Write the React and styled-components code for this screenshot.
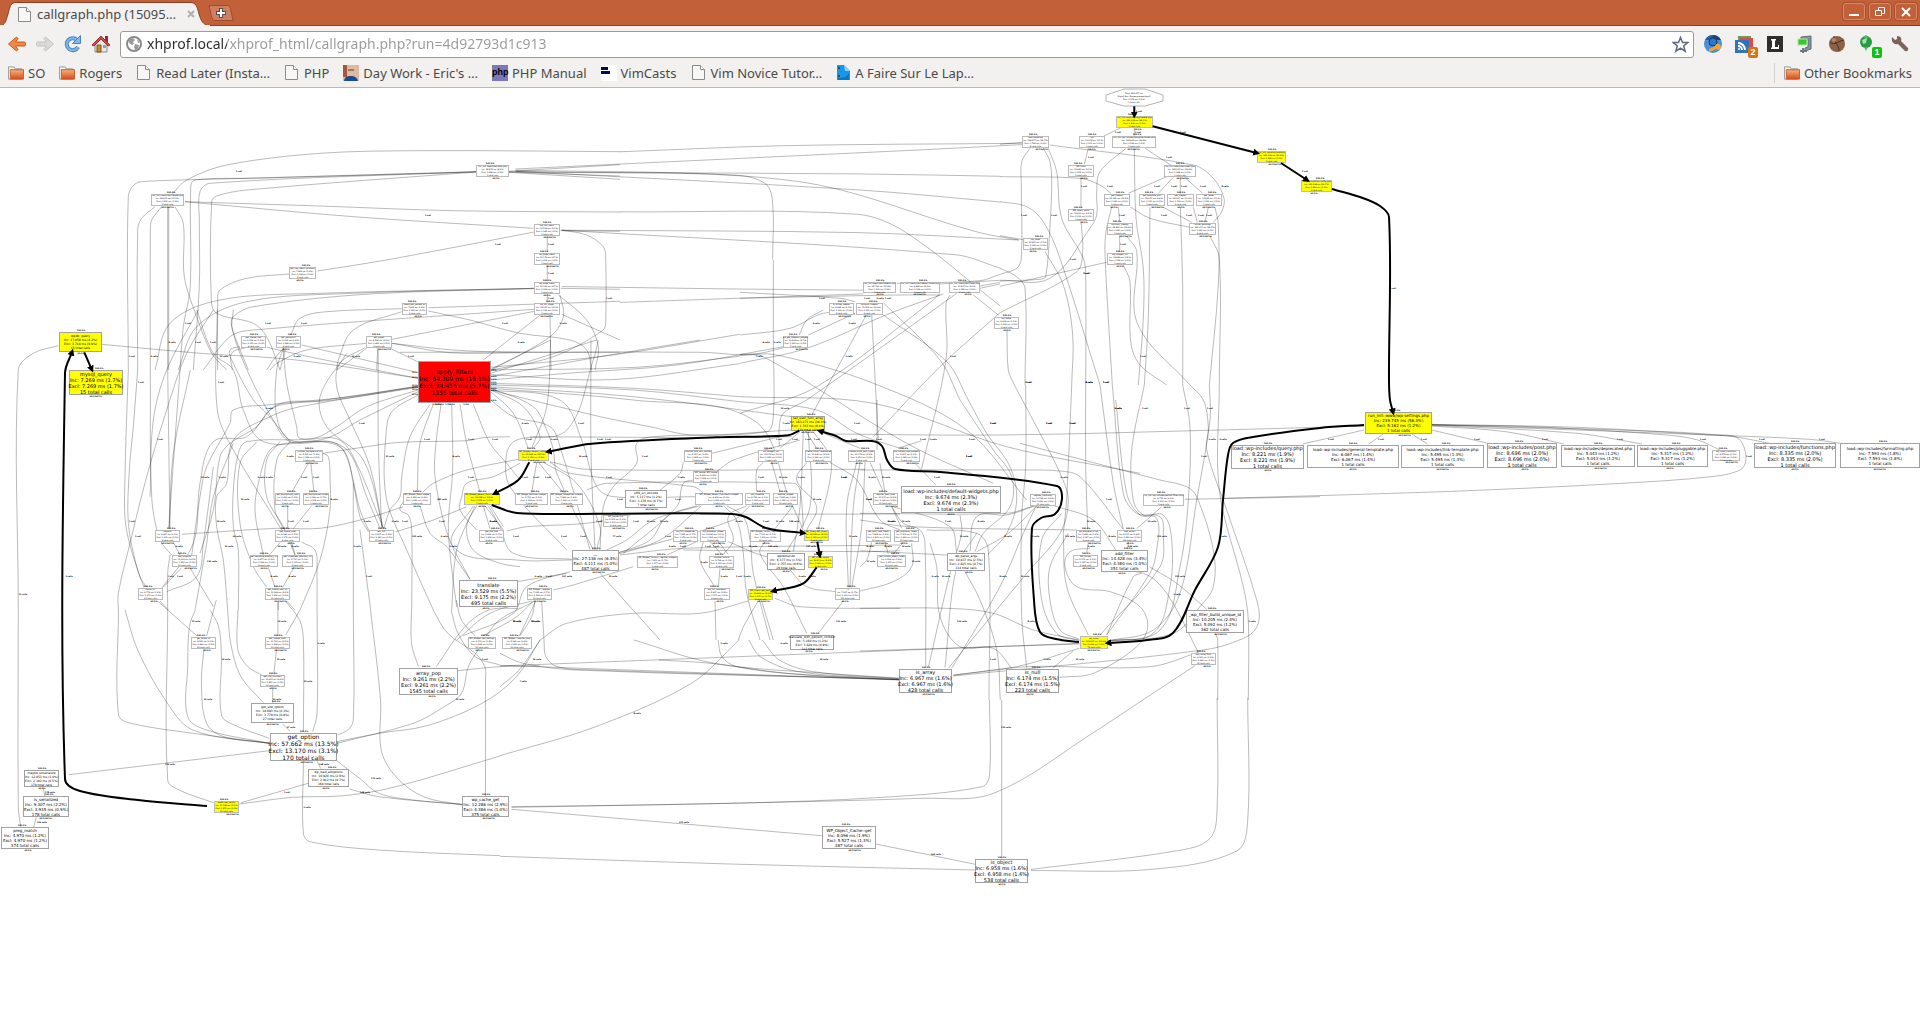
import React from "react";
import styled, { createGlobalStyle } from "styled-components";

const Global = createGlobalStyle`
  * { box-sizing: border-box; }
  html, body { margin: 0; height: 100%; background: #fff; }
  body { font-family: "Noto Sans", "Open Sans", sans-serif; overflow: hidden; }
  button { font: inherit; padding: 0; border: 0; background: none; color: inherit; }
`;

/* ---------- browser frame ---------- */

const Window = styled.div`
  display: flex;
  flex-direction: column;
  height: 100vh;
`;
const TitleBar = styled.header`
  display: flex;
  align-items: flex-end;
  height: 26px;
  flex: none;
  background: #c26039;
  border-bottom: 1px solid #8b4023;
`;
const Tab = styled.div`
  position: relative;
  display: flex;
  align-items: center;
  gap: 4px;
  width: 206px;
  height: 24px;
  margin-bottom: -1px;
  padding: 0 11px 0 17px;
  color: #4a4a4a;
  font-size: 13px;
  line-height: 20px;
`;
const TabShape = styled.svg`
  position: absolute;
  left: 0;
  top: 0;
  width: 210px;
  height: 24px;
`;
const TabTitle = styled.span`
  position: relative;
  flex: 1;
  white-space: nowrap;
`;
const TabPart = styled.span`
  position: relative;
  display: flex;
`;
const TabClose = styled.button`
  position: relative;
  display: flex;
`;
const NewTab = styled.button`
  display: flex;
  margin: 0 0 4px 2px;
`;
const WindowButtons = styled.div`
  display: flex;
  gap: 4px;
  margin: 0 3px 5px auto;
`;
const WindowButton = styled.button`
  display: flex;
  align-items: center;
  justify-content: center;
  width: 22px;
  height: 17px;
  border: 1px solid #d58a6c;
  border-radius: 3px;
  box-shadow: 0 0 0 1px #a9502e;
`;
const Toolbar = styled.nav`
  display: flex;
  align-items: center;
  flex: none;
  height: 35px;
  padding: 1px 11px 0 7px;
  background: #f2f1ef;
`;
const NavButtons = styled.div`
  display: flex;
  gap: 8px;
  margin-right: 9px;
`;
const IconButton = styled.button`
  position: relative;
  display: flex;
  width: 20px;
  height: 20px;
`;
const Omnibox = styled.div`
  display: flex;
  align-items: center;
  gap: 5px;
  flex: 1;
  height: 27px;
  padding: 0 4px 0 5px;
  background: #fff;
  border: 1px solid #9d9b97;
  border-radius: 3px;
`;
const Address = styled.input`
  flex: 1;
  min-width: 0;
  padding: 0;
  border: 0;
  outline: 0;
  font: 14px/22px "Noto Sans", sans-serif;
  color: transparent;
  background: linear-gradient(to right, #2b2b2b 0 80px, #9a9a9a 80px);
  -webkit-background-clip: text;
  background-clip: text;
`;
const Extensions = styled.div`
  display: flex;
  gap: 11px;
  margin-left: 9px;
`;
const Badge = styled.span`
  position: absolute;
  right: -4px;
  bottom: -4px;
  width: 10px;
  height: 11px;
  border-radius: 2px;
  background: ${(p) => p.$color};
  color: #fff;
  font: bold 9px/11px "Liberation Sans", sans-serif;
  text-align: center;
`;
const BookmarkBar = styled.nav`
  display: flex;
  align-items: center;
  flex: none;
  height: 27px;
  padding: 0 8px 3px;
  gap: 14px;
  background: #f2f1ef;
  border-bottom: 1px solid #b9b8b6;
  color: #4a4a4a;
  font-size: 13px;
  line-height: 20px;
`;
const Bookmark = styled.a`
  display: flex;
  align-items: center;
  gap: 4px;
  color: inherit;
  text-decoration: none;
  white-space: nowrap;
`;
const OtherBookmarks = styled.div`
  display: flex;
  margin-left: auto;
  padding-left: 9px;
  border-left: 1px solid #d3d2d0;
`;

const PageIcon = () => (
  <svg width="16" height="17" viewBox="0 0 16 17">
    <path d="M1.5 1.5h8l4 4v10h-12z" fill="#f7f7f7" stroke="#8a8a88" strokeLinejoin="round" />
    <path d="M9.5 1.5v4h4" fill="#fff" stroke="#8a8a88" />
  </svg>
);
const FolderIcon = () => (
  <svg width="16" height="16" viewBox="0 0 17 16">
    <defs>
      <linearGradient id="folder" x1="0" y1="0" x2="0" y2="1">
        <stop offset="0" stopColor="#f6b27c" />
        <stop offset="1" stopColor="#da4a16" />
      </linearGradient>
    </defs>
    <path d="M.5 14.500V1.500h6l1 2h7v11z" fill="#f4f2f0" stroke="#999" />
    <path d="M2.500 4.500h14v10h-14z" fill="url(#folder)" stroke="#c85a2a" />
  </svg>
);
const PhotoIcon = () => (
  <svg width="16" height="16">
    <rect width="16" height="16" fill="#dcb9a4" />
    <rect width="4" height="12" fill="#a3573d" />
    <ellipse cx="8" cy="6" rx="3" ry="4" fill="#e8b89a" />
    <path d="M5 5h6" stroke="#4b3b38" />
    <path d="M1 16c1-5 4-5 7-5s6 1 7 5z" fill="#1c4a8e" />
  </svg>
);
const PhpTile = styled.span`
  width: 16px;
  height: 16px;
  background: #7a78b8;
  color: #000;
  font: bold 9px/14px "Liberation Sans", sans-serif;
  text-align: center;
`;
const VimIcon = () => (
  <svg width="16" height="16">
    <rect width="16" height="16" fill="#fff" />
    <path d="M0 2h7v3H0zM0 6h9v3H0z" fill="#06094a" />
  </svg>
);
const BlueIcon = () => (
  <svg width="15" height="17">
    <path d="M1 1h7l6 6v9H1z" fill="#1797e6" />
    <path d="M8 1l6 6H9z" fill="#8fd0f7" />
    <path d="M2 16h11V9c-2 4-6 5-11 5z" fill="#0b76c4" />
    <circle cx="3" cy="4" r="1" fill="#234" />
    <circle cx="3" cy="12" r="1" fill="#234" />
  </svg>
);

const BOOKMARKS = [
  [FolderIcon, "SO"],
  [FolderIcon, "Rogers"],
  [PageIcon, "Read Later (Insta…"],
  [PageIcon, "PHP"],
  [PhotoIcon, "Day Work - Eric's …"],
  [() => <PhpTile>php</PhpTile>, "PHP Manual"],
  [VimIcon, "VimCasts"],
  [PageIcon, "Vim Novice Tutor…"],
  [BlueIcon, "A Faire Sur Le Lap…"],
];

const Arrow = ({ color, edge, flip }) => (
  <svg width="20" height="20" viewBox="0 0 20 20" transform={flip ? "scale(-1 1)" : undefined}>
    <path d="M1.500 10l8-7 1.500 1.500L8.500 8h9c1.500 0 1.500 4 0 4h-9l2.500 3.500-1.500 1.500z" fill={color} stroke={edge} strokeLinejoin="round" />
  </svg>
);

function Frame() {
  return (
    <>
      <TitleBar>
        <Tab>
          <TabShape viewBox="0 0 210 24">
            <path d="M0 24C5 23 6 19 8 12C10 4 11 .5 16 .5H190C196 .5 197 4 199 12C201 19 203 23 210 24Z" fill="#f2f1ef" stroke="#8b4023" />
            <path d="M0 24H210" stroke="#f2f1ef" strokeWidth="2" />
          </TabShape>
          <TabPart><PageIcon /></TabPart>
          <TabTitle>callgraph.php (15095…</TabTitle>
          <TabClose aria-label="Close tab">
            <svg width="8" height="8"><path d="M1 1l6 6M7 1l-6 6" stroke="#b3b0ad" strokeWidth="2" /></svg>
          </TabClose>
        </Tab>
        <NewTab aria-label="New tab">
          <svg width="26" height="16">
            <path d="M1 .5h19c2 0 2 1 5 15H7C3 15.500 3 8 1 .5z" fill="#cf7f60" stroke="#a04b2a" />
            <path d="M13 3v10M8 8h10" stroke="#574a55" strokeWidth="4" />
            <path d="M13 4v8M9 8h8" stroke="#fff" strokeWidth="2" />
          </svg>
        </NewTab>
        <WindowButtons>
          <WindowButton aria-label="Minimize"><svg width="12" height="10"><path d="M1 8h10" stroke="#fff" strokeWidth="2" /></svg></WindowButton>
          <WindowButton aria-label="Restore">
            <svg width="12" height="10" fill="none" stroke="#fff"><path d="M4.500 3V.5h6v6H8" /><path d="M1.500 3.500h6v5h-6z" /></svg>
          </WindowButton>
          <WindowButton aria-label="Close"><svg width="10" height="10"><path d="M1 1l8 8M9 1l-8 8" stroke="#fff" strokeWidth="2" /></svg></WindowButton>
        </WindowButtons>
      </TitleBar>
      <Toolbar>
        <NavButtons>
          <IconButton aria-label="Back"><Arrow color="#f08a3c" edge="#c9581a" /></IconButton>
          <IconButton aria-label="Forward"><Arrow color="#dcdad7" edge="#c4c2bf" flip /></IconButton>
          <IconButton aria-label="Reload">
            <svg width="20" height="20">
              <path d="M15 13a6 6 0 1 1-1-7" fill="none" stroke="#4587c7" strokeWidth="4" />
              <path d="M15 13a6 6 0 1 1-1-7" fill="none" stroke="#82b6e6" strokeWidth="2" />
              <path d="M17.500 1.500v8h-8z" fill="#82b6e6" stroke="#4587c7" />
            </svg>
          </IconButton>
          <IconButton aria-label="Home">
            <svg width="20" height="20">
              <path d="M4 9l6-5 6 5v9H4z" fill="#ece9e4" stroke="#8c8a86" />
              <path d="M14 2h3v6h-3z" fill="#8f2f2f" />
              <path d="M1 11l9-9 9 9-2 1-7-7-7 7z" fill="#d44b4b" stroke="#a52b2b" />
              <path d="M6 11h4v7H6z" fill="#c98a2d" stroke="#7e5518" />
              <path d="M12 11h3v3h-3z" fill="#7ea7cf" />
            </svg>
          </IconButton>
        </NavButtons>
        <Omnibox>
          <svg width="16" height="16">
            <circle cx="8" cy="8" r="7" fill="#fff" stroke="#8a8a8a" strokeWidth="2" />
            <path d="M3 3l4-1 2 2-2 2 1 2-2 1-3-2zM9 8l4 1-1 4-3 1-1-3zM11 3l3 3-2 1z" fill="#9a9a9a" />
          </svg>
          <Address aria-label="Address" defaultValue="xhprof.local/xhprof_html/callgraph.php?run=4d92793d1c913" />
          <svg width="17" height="17" viewBox="0 0 17 17">
            <path d="M8.500 1.500l2 5h5.200l-4 3.400 1.500 5.300-4.700-3-4.700 3 1.500-5.300-4-3.400h5.200z" fill="#fff" stroke="#5f6980" strokeWidth="1.500" />
          </svg>
        </Omnibox>
        <Extensions>
          <IconButton aria-label="Chromium account">
            <svg width="20" height="20">
              <circle cx="10" cy="10" r="9" fill="#4b8fd8" />
              <path d="M10 1a9 9 0 0 1 8 5h-8z" fill="#1d4278" />
              <path d="M2 6a9 9 0 0 1 8-5v5z" fill="#2c5f9f" />
              <circle cx="10" cy="8" r="4" fill="#2a7ad0" stroke="#16365f" />
              <path d="M6 15l6-3a3 3 0 1 1 1 3l-4 2-3 1z" fill="#f0a43a" />
            </svg>
          </IconButton>
          <IconButton aria-label="RSS feeds">
            <svg width="20" height="20">
              <path d="M4 2h13v10H4z" fill="#6d9c4c" />
              <path d="M6 4h13v10H6z" fill="#d9494f" />
              <path d="M1 6h14v13H1z" fill="#2f74b8" />
              <path d="M4 9a7 7 0 0 1 7 7M4 12a4 4 0 0 1 4 4" fill="none" stroke="#fff" strokeWidth="2" />
              <circle cx="5" cy="15" r="1" fill="#fff" />
            </svg>
            <Badge $color="#d9730d">2</Badge>
          </IconButton>
          <IconButton aria-label="Lazarus">
            <svg width="20" height="20">
              <rect x="2" y="2" width="16" height="16" fill="#2e2e2e" />
              <path d="M6 5h5v1l-1 1v6h3v-2h1v4H6v-1l1-1V7L6 6z" fill="#fff" />
            </svg>
          </IconButton>
          <IconButton aria-label="Screen capture">
            <svg width="20" height="20">
              <path d="M5 3l10-1v13l-6 2v-3l3-1V5L5 6z" fill="#8294a0" stroke="#5d6d78" />
              <rect x="2" y="5" width="9" height="6" fill="#34c924" stroke="#aee8a4" />
              <path d="M4 17h7M7 14v5" stroke="#6b7a84" strokeWidth="2" />
            </svg>
          </IconButton>
          <IconButton aria-label="Cookies">
            <svg width="20" height="20">
              <circle cx="10" cy="10" r="8" fill="#8b6148" />
              <path d="M3 8c5 4 8-1 14-2M7 2c-1 6 5 8 5 15" fill="none" stroke="#4f3021" />
              <circle cx="7" cy="6" r="2" fill="#b08a70" />
            </svg>
          </IconButton>
          <IconButton aria-label="Proxy status">
            <svg width="20" height="20">
              <ellipse cx="8" cy="8" rx="6" ry="6" fill="#2c9a45" />
              <path d="M8 1l3 2-3 2-3-2zM6 13h4l-2 4z" fill="#55b36a" />
              <path d="M4 6l5-2-1 5-3 1z" fill="#9be5a6" />
            </svg>
            <Badge $color="#0cc40c">1</Badge>
          </IconButton>
          <IconButton aria-label="Settings">
            <svg width="20" height="20">
              <path d="M3 3l3 3 2-1V2c4 0 5 3 4 5l7 7c1 2-1 4-3 3L9 10c-4 1-7-2-6-7z" fill="#7d6257" />
            </svg>
          </IconButton>
        </Extensions>
      </Toolbar>
      <BookmarkBar>
        {BOOKMARKS.map(([Icon, text]) => (
          <Bookmark href="#" key={text}><Icon />{text}</Bookmark>
        ))}
        <OtherBookmarks><Bookmark href="#"><FolderIcon />Other Bookmarks</Bookmark></OtherBookmarks>
      </BookmarkBar>
    </>
  );
}

/* ---------- call graph ---------- */

const Viewport = styled.main`
  position: relative;
  flex: 1;
  min-height: 0;
  overflow: hidden;
  background: #fff;
`;
const Edges = styled.svg`
  position: absolute;
  left: 0;
  top: 0;
  font-family: "DejaVu Sans", sans-serif;
`;
const Thin = styled.path`
  fill: none;
  stroke: rgba(0, 0, 0, 0.27);
`;
const Thick = styled.path`
  fill: none;
  stroke: #000;
  stroke-width: 2px;
`;
const Tag = styled.text`
  font-size: 2px;
  font-weight: ${(p) => (p.$strong ? "bold" : "normal")};
  text-anchor: middle;
  fill: #000;
`;
const FILL = { w: "#fff", y: "#ffff00", r: "#ff0000" };
const LINE = { 2: 3, 3: 4, 4: 5, 5: 6, 6: 7 };
const Box = styled.div`
  position: absolute;
  display: flex;
  flex-direction: column;
  align-items: center;
  justify-content: center;
  background: ${(p) => FILL[p.$fill]};
  border: 1px solid ${(p) => (p.$size === 2 ? "#bcbcbc" : "#a2a2a2")};
  color: #000;
  font: ${(p) => p.$size}px/${(p) => LINE[p.$size]}px "DejaVu Sans", sans-serif;
  white-space: nowrap;
`;

const TOP = 88;
/* Each sheet maps its own units on to the canvas: origin x, origin y, units per pixel in x and in y. */
const SHEETS = {
  whole: [0, 0, 0.8167, 0.8167],
  page: [0, 0, 1, 1],
  nw: [120, 120, 3, 3],
  ne: [1000, 85, 3, 3],
  n: [740, 260, 3, 3],
  w: [0, 310, 3, 3],
  mid: [400, 340, 3, 3],
  e: [860, 400, 3, 3],
  far: [1220, 400, 2.24, 3],
  sw: [0, 600, 2.904, 3],
  s: [500, 640, 2.613, 3],
};
const place = ([ox, oy, sx, sy], x, y) => [ox + x / sx, oy + y / sy - TOP];

/* x, y (centre), width, height, text size, fill, name, inclusive, exclusive, calls */
const NODES = {
  ne: [
    [403, 110, 110, 36, 2, "y", "run_init::www/wp-blog-header.php", "422.159 ms (99.1%)", "0.409 ms (0.1%)", 1],
    [815, 216, 88, 36, 2, "y", "run_init::www/wp-load.php", "242.159 ms (56.9%)", "0.248 ms (0.1%)", 1],
    [950, 303, 94, 36, 2, "y", "run_init::www/wp-config.php", "241.384 ms (56.7%)", "0.280 ms (0.1%)", 1],
    [108, 171, 82, 36, 2, "w", "load_template", "164.877 ms (38.7%)", "0.794 ms (0.2%)", 8],
    [274, 171, 77, 36, 2, "w", "wp", "13.008 ms (3.1%)", "0.011 ms (0.0%)", 1],
    [402, 171, 132, 36, 2, "w", "run_init::wp-includes/template-loader.php", "165.803 ms (38.9%)", "0.238 ms (0.1%)", 1],
    [243, 259, 77, 36, 2, "w", "WP::main", "12.983 ms (3.0%)", "0.015 ms (0.0%)", 1],
    [541, 259, 97, 36, 2, "w", "run_init::twentyten/index.php", "165.237 ms (38.8%)", "0.088 ms (0.0%)", 1],
    [350, 346, 77, 36, 2, "w", "get_sidebar", "66.085 ms (15.5%)", "0.032 ms (0.0%)", 1],
    [456, 346, 77, 36, 2, "w", "get_template_part", "35.870 ms (8.4%)", "0.030 ms (0.0%)", 1],
    [541, 346, 80, 36, 2, "w", "get_header", "49.237 ms (11.6%)", "0.023 ms (0.0%)", 1],
    [627, 346, 77, 36, 2, "w", "get_footer", "13.922 ms (3.3%)", "0.021 ms (0.0%)", 1],
    [243, 391, 77, 36, 2, "w", "WP::query_posts", "10.811 ms (2.5%)", "0.012 ms (0.0%)", 1],
    [608, 433, 82, 36, 2, "w", "locate_template", "165.017 ms (38.7%)", "0.260 ms (0.1%)", 8],
    [108, 478, 76, 36, 2, "w", "wp_head", "30.920 ms (7.3%)", "0.009 ms (0.0%)", 1],
    [359, 433, 77, 36, 2, "w", "dynamic_sidebar", "64.866 ms (15.2%)", "0.290 ms (0.1%)", 1],
    [359, 521, 77, 36, 2, "w", "wp_widgets_init", "14.884 ms (3.5%)", "0.159 ms (0.0%)", 1],
  ],
  nw: [
    [144, 241, 100, 36, 2, "w", "run_init::twentyten/header.php", "48.873 ms (11.5%)", "0.562 ms (0.1%)", 1],
    [1117, 154, 98, 36, 2, "w", "run_init::twentyten/loop.php", "34.975 ms (8.2%)", "0.548 ms (0.1%)", 1],
    [1282, 329, 78, 36, 2, "w", "wp_nav_menu", "21.538 ms (5.1%)", "0.145 ms (0.0%)", 1],
    [549, 460, 82, 36, 2, "w", "get_nav_menu_locations", "7.862 ms (1.8%)", "0.039 ms (0.0%)", 1],
    [1282, 416, 78, 36, 2, "w", "wp_page_menu", "20.178 ms (4.7%)", "0.016 ms (0.0%)", 1],
    [1282, 504, 78, 36, 2, "w", "wp_page_menu", "20.162 ms (4.7%)", "0.128 ms (0.0%)", 1],
    [1282, 566, 78, 36, 2, "w", "wp_list_pages", "18.127 ms (4.3%)", "0.136 ms (0.0%)", 1],
    [884, 566, 76, 36, 2, "w", "twentyten_posted_on", "7.825 ms (1.8%)", "0.063 ms (0.0%)", 1],
    [402, 666, 76, 36, 2, "w", "get_theme_root", "5.058 ms (1.2%)", "0.051 ms (0.0%)", 8],
    [505, 666, 76, 36, 2, "w", "get_permalink", "6.025 ms (1.4%)", "0.249 ms (0.1%)", 8],
    [777, 666, 77, 36, 2, "w", "get_pages", "9.536 ms (2.2%)", "0.460 ms (0.1%)", 3],
  ],
  n: [
    [420, 84, 100, 34, 2, "w", "run_init::twentyten/sidebar.php", "65.731 ms (15.4%)", "0.102 ms (0.0%)", 1],
    [540, 84, 120, 34, 2, "w", "run_init::twentyten/sidebar-footer.php", "9.988 ms (2.3%)", "0.129 ms (0.0%)", 1],
    [674, 84, 92, 34, 2, "w", "run_init::twentyten/footer.php", "13.527 ms (3.2%)", "0.089 ms (0.0%)", 1],
    [306, 146, 76, 36, 2, "w", "is_active_sidebar", "9.889 ms (2.3%)", "0.126 ms (0.0%)", 5],
    [390, 146, 82, 36, 2, "w", "dynamic_sidebar", "72.209 ms (16.9%)", "0.601 ms (0.1%)", 2],
    [168, 245, 76, 36, 2, "w", "wp_get_sidebars_widgets", "11.464 ms (2.7%)", "0.335 ms (0.1%)", 7],
    [801, 190, 76, 36, 2, "w", "wp_footer", "4.614 ms (1.1%)", "0.006 ms (0.0%)", 1],
    [205, 490, 103, 44, 3, "y", "call_user_func_array", "163.271 ms (38.3%)", "1.743 ms (0.4%)", 128],
    [91, 588, 77, 36, 2, "w", "wp_widgets_init", "13.274 ms (3.1%)", "0.043 ms (0.0%)", 1],
    [235, 588, 80, 36, 2, "w", "create_initial_taxonomies", "10.440 ms (2.5%)", "0.140 ms (0.0%)", 2],
    [366, 588, 82, 36, 2, "w", "create_initial_post_types", "12.075 ms (2.8%)", "0.210 ms (0.0%)", 2],
    [500, 588, 82, 36, 2, "w", "wp_maybe_load_widgets", "9.807 ms (2.3%)", "0.086 ms (0.0%)", 1],
  ],
  w: [
    [241, 95, 130, 60, 3, "y", "wpdb::query", "17.858 ms (4.2%)", "3.718 ms (0.9%)", 15],
    [289, 216, 163, 74, 5, "y", "mysql_query", "7.269 ms (1.7%)", "7.269 ms (1.7%)", 15],
    [1363, 217, 218, 127, 6, "r", "apply_filters", "64.309 ms (15.1%)", "24.415 ms (5.7%)", 1355],
    [927, 438, 83, 36, 2, "w", "_custom_background_cb", "5.512 ms (1.3%)", "0.046 ms (0.0%)", 1],
    [863, 568, 75, 36, 2, "w", "get_background_color", "2.408 ms (0.6%)", "0.011 ms (0.0%)", 1],
    [947, 568, 78, 36, 2, "w", "get_background_image", "3.029 ms (0.7%)", "0.009 ms (0.0%)", 1],
    [1252, 568, 84, 36, 2, "w", "WP_Widget_Meta::widget", "5.828 ms (1.4%)", "0.246 ms (0.1%)", 1],
    [503, 678, 76, 36, 2, "w", "bloginfo", "8.867 ms (2.1%)", "0.032 ms (0.0%)", 9],
    [863, 678, 76, 36, 2, "w", "get_theme_mod", "9.186 ms (2.2%)", "0.172 ms (0.0%)", 9],
    [1144, 678, 76, 36, 2, "w", "esc_attr", "5.937 ms (1.4%)", "0.390 ms (0.1%)", 37],
    [1476, 678, 76, 36, 2, "w", "get_the_title", "2.906 ms (0.7%)", "0.208 ms (0.0%)", 8],
    [554, 754, 76, 36, 2, "w", "get_bloginfo", "11.221 ms (2.6%)", "0.550 ms (0.1%)", 21],
    [792, 754, 84, 36, 2, "w", "get_template_directory_uri", "6.477 ms (1.5%)", "0.086 ms (0.0%)", 8],
    [891, 754, 92, 36, 2, "w", "get_stylesheet_directory_uri", "5.737 ms (1.3%)", "0.033 ms (0.0%)", 4],
    [452, 853, 76, 36, 2, "w", "home_url", "6.778 ms (1.6%)", "0.171 ms (0.0%)", 23],
    [834, 853, 76, 36, 2, "w", "get_theme_root_uri", "10.098 ms (2.4%)", "0.208 ms (0.0%)", 10],
    [1464, 851, 177, 80, 5, "w", "translate", "23.529 ms (5.5%)", "9.175 ms (2.2%)", 495],
  ],
  mid: [
    [400, 348, 94, 34, 2, "y", "WP_Widget::display_callback", "60.992 ms (14.3%)", "1.009 ms (0.2%)", 7],
    [245, 478, 108, 36, 2, "y", "WP_Widget_Recent_Posts::widget", "23.045 ms (5.4%)", "0.378 ms (0.1%)", 1],
    [394, 478, 98, 36, 2, "w", "WP_Widget_Archives::widget", "5.701 ms (1.3%)", "0.124 ms (0.0%)", 1],
    [500, 478, 100, 36, 2, "w", "WP_Widget_Categories::widget", "7.893 ms (1.9%)", "0.080 ms (0.0%)", 1],
    [895, 348, 84, 36, 2, "w", "sanitize_title_with_dashes", "6.157 ms (1.4%)", "0.425 ms (0.1%)", 7],
    [919, 412, 78, 36, 2, "w", "WP_Locale::WP_Locale", "5.825 ms (1.4%)", "0.508 ms (0.1%)", 1],
    [736, 478, 125, 54, 3, "w", "utf8_uri_encode", "5.317 ms (1.2%)", "3.176 ms (0.7%)", 7],
    [957, 478, 144, 36, 2, "w", "WP_Widget_Recent_Comments::widget", "8.409 ms (2.0%)", "0.202 ms (0.0%)", 1],
    [1073, 478, 76, 36, 2, "w", "wp_schedule", "8.765 ms (2.1%)", "0.028 ms (0.0%)", 1],
    [1157, 478, 76, 36, 2, "w", "register_widget", "7.820 ms (1.8%)", "0.080 ms (0.0%)", 12],
    [648, 544, 76, 36, 2, "w", "WP_Locale::init", "5.000 ms (1.2%)", "0.300 ms (0.1%)", 1],
    [855, 587, 74, 36, 2, "w", "wp_list_categories", "7.084 ms (1.7%)", "0.072 ms (0.0%)", 1],
    [940, 587, 78, 36, 2, "w", "wp_dropdown_pages", "12.840 ms (3.0%)", "0.306 ms (0.1%)", 3],
    [1097, 587, 94, 36, 2, "w", "WP_Widget_Factory::register", "7.100 ms (1.7%)", "0.202 ms (0.0%)", 12],
    [1249, 587, 76, 34, 2, "y", "WP_Query::WP_Query", "18.045 ms (4.2%)", "0.060 ms (0.0%)", 1],
    [1262, 665, 76, 36, 2, "y", "WP_Query::query", "24.512 ms (5.8%)", "0.042 ms (0.0%)", 3],
    [585, 662, 140, 64, 4, "w", "__", "27.136 ms (6.4%)", "4.111 ms (1.0%)", 487],
    [771, 665, 123, 36, 2, "w", "WP_Widget_Factory::_register_widgets", "7.400 ms (1.7%)", "0.177 ms (0.0%)", 1],
    [965, 665, 76, 36, 2, "w", "number_format", "5.728 ms (1.3%)", "0.120 ms (0.0%)", 2],
    [1157, 665, 113, 50, 3, "w", "wptexturize", "6.377 ms (1.5%)", "2.755 ms (0.6%)", 29],
    [420, 763, 76, 36, 2, "w", "WP_Widget::_register", "7.065 ms (1.7%)", "0.364 ms (0.1%)", 13],
    [952, 763, 78, 36, 2, "w", "wp_list_comments", "5.837 ms (1.4%)", "0.071 ms (0.0%)", 5],
    [1083, 763, 76, 34, 2, "y", "WP_Query::get_posts", "23.893 ms (5.6%)", "3.000 ms (0.7%)", 3],
    [1344, 763, 76, 36, 2, "w", "_x", "7.237 ms (1.7%)", "1.100 ms (0.3%)", 112],
    [1458, 478, 76, 36, 2, "w", "register_post_type", "10.107 ms (2.4%)", "1.029 ms (0.2%)", 10],
  ],
  e: [
    [274, 299, 300, 82, 5, "w", "load::wp-includes/default-widgets.php", "9.674 ms (2.3%)", "9.674 ms (2.3%)", 1],
    [549, 299, 78, 36, 2, "w", "register_taxonomy", "11.785 ms (2.8%)", "0.920 ms (0.2%)", 10],
    [911, 299, 122, 36, 2, "w", "run_init::wp-includes/default-filters.php", "8.772 ms (2.1%)", "3.100 ms (0.7%)", 1],
    [57, 408, 76, 36, 2, "w", "get_post_type_labels", "7.864 ms (1.8%)", "0.260 ms (0.1%)", 10],
    [140, 408, 76, 36, 2, "w", "get_taxonomy_labels", "7.303 ms (1.7%)", "0.260 ms (0.1%)", 10],
    [686, 408, 76, 36, 2, "w", "wp_enqueue_script", "5.983 ms (1.4%)", "0.097 ms (0.0%)", 4],
    [810, 408, 76, 36, 2, "w", "add_action", "8.111 ms (1.9%)", "0.590 ms (0.1%)", 104],
    [95, 484, 88, 36, 2, "w", "_get_custom_object_labels", "2.508 ms (0.6%)", "0.872 ms (0.2%)", 20],
    [319, 486, 115, 54, 3, "w", "wp_parse_args", "10.837 ms (2.5%)", "2.825 ms (0.7%)", 114],
    [678, 484, 76, 36, 2, "w", "WP_Scripts", "5.172 ms (1.2%)", "0.087 ms (0.0%)", 1],
    [795, 484, 142, 66, 4, "w", "add_filter", "14.428 ms (3.4%)", "4.380 ms (1.0%)", 351],
    [1066, 664, 174, 68, 4, "w", "_wp_filter_build_unique_id", "10.205 ms (2.4%)", "5.092 ms (1.2%)", 362],
    [1221, 170, 219, 72, 5, "w", "load::wp-includes/query.php", "8.221 ms (1.9%)", "8.221 ms (1.9%)", 1],
    [701, 729, 84, 40, 2, "y", "do_action", "108.807 ms (25.6%)", "2.608 ms (0.6%)", 72],
    [1030, 777, 76, 36, 2, "w", "wp_cache_flush", "8.063 ms (1.9%)", "0.280 ms (0.1%)", 35],
    [196, 843, 158, 72, 5, "w", "is_array", "6.967 ms (1.6%)", "6.967 ms (1.6%)", 428],
    [517, 843, 158, 72, 5, "w", "is_null", "6.174 ms (1.5%)", "6.174 ms (1.5%)", 223],
  ],
  far: [
    [399, 70, 150, 66, 4, "y", "run_init::www/wp-settings.php", "239.745 ms (56.3%)", "5.162 ms (1.2%)", 1],
    [297, 168, 206, 68, 4, "w", "load::wp-includes/general-template.php", "6.067 ms (1.4%)", "6.067 ms (1.4%)", 1],
    [499, 168, 186, 68, 4, "w", "load::wp-includes/link-template.php", "5.495 ms (1.3%)", "5.495 ms (1.3%)", 1],
    [677, 168, 157, 76, 5, "w", "load::wp-includes/post.php", "8.696 ms (2.0%)", "8.696 ms (2.0%)", 1],
    [846, 168, 165, 66, 4, "w", "load::wp-includes/deprecated.php", "5.043 ms (1.2%)", "5.043 ms (1.2%)", 1],
    [1014, 168, 158, 66, 4, "w", "load::wp-includes/pluggable.php", "5.317 ms (1.2%)", "5.317 ms (1.2%)", 1],
    [1132, 168, 62, 34, 2, "w", "wp_initial_constants", "4.578 ms (1.1%)", "0.092 ms (0.0%)", 1],
    [1289, 168, 184, 76, 5, "w", "load::wp-includes/functions.php", "8.335 ms (2.0%)", "8.335 ms (2.0%)", 1],
    [1478, 168, 180, 76, 4, "w", "load::wp-includes/formatting.php", "7.593 ms (1.8%)", "7.593 ms (1.8%)", 1],
  ],
  sw: [
    [592, 128, 74, 36, 2, "w", "get_home_url", "8.580 ms (2.0%)", "0.980 ms (0.2%)", 23],
    [807, 128, 74, 36, 2, "w", "get_theme_roots", "10.790 ms (2.5%)", "0.209 ms (0.0%)", 20],
    [1399, 128, 80, 36, 2, "w", "WP_Widget::get_settings", "6.170 ms (1.4%)", "0.562 ms (0.1%)", 20],
    [1500, 128, 86, 36, 2, "w", "WP_Widget::_register_one", "5.280 ms (1.2%)", "0.610 ms (0.1%)", 13],
    [792, 243, 73, 36, 2, "w", "get_site_transient", "10.400 ms (2.4%)", "0.450 ms (0.1%)", 20],
    [792, 340, 125, 60, 3, "w", "get_site_option", "18.093 ms (4.3%)", "3.779 ms (0.9%)", 27],
    [1243, 243, 171, 80, 5, "w", "array_pop", "9.261 ms (2.2%)", "9.261 ms (2.2%)", 1545],
    [881, 440, 196, 84, 6, "w", "get_option", "57.662 ms (13.5%)", "13.170 ms (3.1%)", 170],
    [954, 535, 120, 54, 3, "w", "wp_load_alloptions", "10.920 ms (2.6%)", "2.912 ms (0.7%)", 168],
    [657, 622, 73, 36, 2, "y", "wpdb::get_results", "13.789 ms (3.2%)", "0.470 ms (0.1%)", 10],
    [122, 535, 102, 50, 3, "w", "maybe_unserialize", "12.853 ms (3.0%)", "2.192 ms (0.5%)", 179],
    [134, 621, 133, 64, 4, "w", "is_serialized", "9.307 ms (2.2%)", "3.935 ms (0.9%)", 178],
    [74, 715, 140, 66, 4, "w", "preg_match", "4.970 ms (1.2%)", "4.970 ms (1.2%)", 374],
    [1410, 621, 137, 64, 4, "w", "wp_cache_get", "12.286 ms (2.9%)", "4.386 ms (1.0%)", 375],
  ],
  s: [
    [815, 8, 116, 46, 3, "w", "translate_with_gettext_context", "5.168 ms (1.2%)", "3.829 ms (0.9%)", 112],
    [912, 594, 140, 70, 4, "w", "WP_Object_Cache::get", "8.096 ms (1.9%)", "5.527 ms (1.3%)", 387],
    [1311, 691, 138, 71, 5, "w", "is_object", "6.958 ms (1.6%)", "6.958 ms (1.6%)", 538],
  ],
};

/* Points of each thin call edge */
const CALLS = {
  nw: `157 222 200 180 320 135 600 100 900 92 1500 95|1068 155 300 177 80 184 45 192 25 230 25 750|1068 156 400 175 225 180 212 200 211 500 190 620 180 750|1068 155 270 190 240 215 238 300 238 500 220 750|1068 156 380 210 290 228 275 245 274 540 290 580 400 610 440 650 480 750|195 245 600 258 1000 272 1500 276|195 245 700 290 1240 325|1243 336 800 420 592 453|508 462 380 475 300 510 293 545 293 750|105 260 65 295 53 330 53 750|125 260 95 300 91 330 91 750|143 260 143 750|146 260 146 750|165 260 190 310 193 470 230 590 275 700 320 750|1243 505 600 520 300 540 150 610 105 750|1243 505 700 520 380 545 230 620 175 750|1243 506 750 522 400 560 340 590 335 620 385 750|1282 348 1282 396|1282 435 1282 484|1282 522 1282 547|1322 330 1400 345 1450 380 1457 415 1457 600 1450 630 1300 710 1115 750|1322 332 1500 334|1165 154 1500 134|1165 155 1500 158|1165 156 1500 168|1165 157 1500 178|1322 505 1500 508|925 563 1500 544|845 566 620 575 540 595 512 645|845 575 700 630 655 720 650 750|1243 568 400 630 330 650 250 750|1243 574 817 658|925 573 1050 600 1200 640 1350 660 1400 690 1415 750|1262 584 1090 720|1290 584 1293 750|1320 525 1330 590 1290 650 1115 750|1315 525 1400 600 1435 680 1425 750|1325 583 1500 660|380 682 335 700 337 750|545 675 890 757|490 685 460 720 440 750|497 685 480 750|740 670 560 690 470 730 450 750|740 685 650 750|773 685 770 750|810 685 893 725|817 670 1000 690 1200 697 1500 697`,
  w: `385 180 375 500 378 650 420 800 440 832|413 180 400 350 388 480 385 640 410 770 432 832|451 180 455 560 480 690 515 735|503 180 510 655|571 180 520 430 508 655|540 180 506 655|595 0 500 180 460 330 450 560|640 0 560 130 500 300 440 500 390 700 355 850 355 900|1254 228 1050 260 800 285 700 300 690 340 620 470 600 560 575 735|1254 230 1000 270 850 283 810 300 770 350 690 400 660 440 640 600 600 730|1254 229 960 272 830 285 740 380 640 395 600 520 580 700 485 835|1254 232 900 290 810 320 700 390 680 520 650 560 650 650 670 750 683 900|1254 240 1100 290 1010 350 940 385 740 395 715 430 700 540 700 650 715 720 715 900|1254 245 1080 330 980 385 860 400 810 420 780 500 765 600 790 735|1254 255 1180 300 1160 350 1158 560 1220 720 1300 900|652 0 652 300 700 420 845 660|590 0 640 130 700 180 730 300 790 395 960 395 1030 420 1060 520 1080 620 1105 665|700 0 697 60 750 200 820 330 870 395 1000 397 1040 440 1080 600 1108 665|720 110 690 120 695 150 760 270 800 310 870 395|850 115 830 180 830 320 870 390 990 395 1050 430 1100 560 1140 655|850 115 860 220 890 350 900 385 1010 386 1060 440 1150 655|1135 115 1135 400 1145 655|1095 113 1020 160 1010 230 1050 330 1110 470 1148 655|1040 130 960 260 980 350 1090 450 1150 655|305 103 600 130 890 150 1254 205|175 107 100 130 55 180 55 900|800 112 950 145 1254 205|1175 100 1350 128 1560 128|927 457 875 547|932 457 942 547|863 587 863 656|935 587 880 656|968 430 1100 410 1200 397 1400 392 1450 383 1530 380|968 430 985 440 990 500 990 600 960 750 900 900|841 697 808 735|875 697 885 735|805 772 825 832|882 772 848 832|905 697 945 720 951 780 951 900|770 395 720 460 720 640 760 770 800 832|840 395 800 450 800 560 850 650 885 735|870 395 830 450 825 600 850 656|545 673 830 655 960 655 1100 625 1210 590|520 697 540 735|545 773 490 832|570 773 640 890|500 845 590 800 610 700 640 470|510 735 503 790 503 900|480 873 505 900|835 873 835 900|860 873 885 900|1290 283 1230 380 1205 500 1200 560 1170 600 1152 655|1300 283 1260 400 1252 547|1323 283 1308 400 1305 500 1345 680 1410 808|1355 283 1358 480 1345 640 1352 750 1370 890|1380 283 1400 400 1440 547|1420 283 1470 400 1520 460 1560 510|1213 570 1200 600 1225 615 1235 660 1235 900|1260 587 1290 670 1340 710 1410 808|1187 665 1300 630 1400 590|1425 587 1370 720 1355 900|1560 447 1400 480 1300 520 1268 547|1560 460 1480 500 1400 520 1385 560 1380 600 1430 660|1450 587 1470 656|1430 587 1400 650 1420 720 1500 760 1560 770|1470 587 1510 650|1060 520 1060 900|1080 660 1112 900|700 400 640 560 620 700 585 900`,
  ne: `403 128 403 152|365 127 312 153|265 190 253 238|243 278 243 370|435 190 512 240|500 275 385 325|520 277 475 325|541 278 541 325|555 278 608 325|355 365 359 412|359 452 359 500|335 365 318 440 315 500 325 700 337 900|378 190 300 260 290 320 290 390 270 430 150 580 0 586|403 190 408 400 430 550 430 700 415 900|150 180 580 240 640 280 672 340 665 380 640 412|0 275 240 280 300 300 333 325|90 190 65 230 64 300 64 520 50 550 0 568|130 190 150 230 155 300 150 420 137 575 120 583 0 588|145 190 170 260 185 400 250 520 257 570 257 900|0 350 80 365 130 410 180 520 300 900|0 452 70 464|135 500 190 600 218 750 215 900|320 532 150 570 0 604|390 365 450 400 570 427|450 367 445 700 433 900|490 367 575 412|541 367 548 600 548 900|580 367 592 412|625 367 615 412|645 367 655 420 655 600 628 900|630 453 658 520 658 900|380 453 410 500 412 715 570 900|370 540 390 590 392 770 420 840 500 900|243 410 248 500 230 560 0 683|0 550 50 575 75 610 75 900|0 178 67 172`,
  n: `100 0 100 240|780 43 720 62 470 70|780 61 600 72|780 67 720 78|780 72 720 85|780 158 600 320 400 530|630 105 618 130 618 300 545 625|700 105 775 165|600 100 580 120 230 380 0 460|650 100 200 420 130 460 118 500 118 560|380 163 215 465|395 163 415 540|430 165 620 305 685 420|430 128 600 300 660 420|801 210 805 330 823 375|0 97 300 115 345 125|0 115 460 105 600 105|0 225 150 205 250 160 345 162|0 310 200 265 450 160 610 102|250 150 200 180 178 225|345 160 205 225|135 262 60 280 0 283|0 285 110 285 400 370 680 510 860 720|0 285 70 290 500 550 760 670|0 410 400 430 800 560 1200 640|0 425 230 450 350 520 480 565`,
  mid: `573 0 573 340 585 630|452 0 440 200 395 325|595 0 580 60 500 270 350 300 320 340 330 440 500 630|1120 0 1120 230 1100 275 760 290 710 310 710 370 640 440 610 500 600 630|390 290 1000 293 1175 290|450 365 560 388 1395 388|272 140 700 170 1175 230|272 145 700 180 1060 240 1170 480 1210 570|272 120 500 100 830 75 1150 20|272 110 600 50 900 0|272 130 700 145 1020 170|272 135 700 150 1020 185|272 150 600 230 750 260 880 285 1175 270|272 100 590 0|272 88 452 0|0 37 900 37 1020 45|272 145 400 200 440 270 460 330 470 400 580 630|272 150 370 200 420 290 400 325|272 155 340 220 385 325|272 180 340 230 450 260 480 320 570 630|272 150 480 180 545 300 590 440 640 470 885 470|410 367 395 458|415 367 490 458|430 367 530 430 600 560 590 630|450 367 510 400 880 440 910 458|255 497 310 570|265 497 300 560 340 640 515 658|220 497 160 620 350 660 515 660|460 750 520 735 700 680|690 527 560 550 380 560 320 573|780 450 840 400 850 367|935 340 1140 290|950 395 1000 360 1200 300|880 420 850 430 830 500 670 640|890 497 800 530 750 600 650 640|900 497 760 540 680 600 620 630|905 497 780 600 650 640|1050 497 1000 540 700 630 655 642|980 497 1030 530 1050 600 1060 700 1110 900|970 497 1010 540 1030 640 1040 760 1080 900|1040 497 985 530 1000 600 970 643|660 645 850 625 1500 615|850 630 1400 635 1500 632|910 605 900 660 945 742|930 605 965 643|955 605 985 643|960 685 955 742|800 645 890 605|985 605 1100 650 1210 655|945 783 948 900|1075 783 1030 860 1015 900|1085 783 1120 900|1045 783 900 820 700 820 500 850 420 900|1125 775 1200 800 1500 805|1330 783 1255 880|1180 497 1100 600 1080 640 1150 740 1220 880|1170 690 1220 740 1305 755|1210 270 1200 500 1180 635|1215 270 1250 325|1225 275 1230 500 1160 635|1200 275 1140 325|1260 275 1380 325|1240 275 1290 350 1290 420 1255 565|1370 367 1340 500 1345 742|1380 367 1360 500 1350 742|1395 367 1385 560 1355 742|1410 367 1450 455|1220 367 1190 420 1250 500 1220 570|1290 367 1370 420 1440 540 1500 570|1090 367 1070 390 1070 455|1115 367 1140 455|560 450 620 430 1180 430 1200 450 1210 560|400 783 350 830 250 887|405 783 395 830 360 887|425 783 432 900|395 783 270 820 170 900|500 700 350 725|510 695 380 740 340 820 190 887|600 700 780 900|1500 522 900 523`,
  e: `497 -45 497 200 485 350 485 650 500 803|51 0 51 150|677 -45 677 200 683 388|635 -45 620 300 610 400|325 0 380 100 450 200 470 300 440 400 385 462|300 0 400 150 455 230 450 320 370 400 345 455|463 -45 540 100 600 220 625 300 600 400 500 520 265 805|720 -45 760 250 790 388|757 -45 790 280 830 340 900 350 910 400 900 500 720 705|767 0 800 280 840 345 890 355 890 450 870 520 740 705|853 -45 815 150 820 300 850 345 910 345 935 420 930 560 880 700 745 722|1048 -45 1050 60 1010 300 960 580 880 690 745 722|968 -45 990 80 985 300 960 500 900 690 745 724|990 -45 1030 0 1045 80 1040 150 1100 330 1190 600 1195 670 1160 710 1030 750 280 828|1078 -45 1078 270 1150 560 1165 660 1165 900|975 298 1380 290|165 190 228 255|185 122 115 145|60 190 75 278|480 130 900 240 980 260 1010 290 1060 450 1060 560 1020 620 940 700 745 724|0 210 480 210 600 213 660 230 790 388|0 340 440 340 520 318|525 318 440 345 350 350 330 455|530 318 445 400 350 455|528 318 490 400 420 560 275 805|95 320 130 370 180 390 195 430 197 800|95 320 125 385|100 320 270 380 290 455|585 318 700 360 768 450|605 340 545 420 545 600 590 700 658 722|625 400 570 500 570 600 600 690 658 718|610 400 620 560 685 705|0 360 150 380 650 390|0 452 260 465|0 625 260 625 400 640 520 690 658 720|0 753 658 732|280 825 470 800 658 745|640 752 578 805|280 826 500 800 870 800 1015 757|600 832 700 820 830 740 863 680 840 620 750 575 650 560 615 500 630 455 690 445|905 320 830 386|685 427 680 460|805 427 803 447|725 515 850 520 920 580 1015 757|868 500 950 550 1040 628|1066 700 1073 720 1073 900|1005 797 848 900|315 515 360 600 410 750 421 900|200 390 350 400 385 450 387 900|300 345 305 400 270 520 205 803|350 400 290 500 255 803|210 430 230 500 240 650 300 740 400 745 455 805|155 430 155 500 100 545 0 573|35 427 20 480 0 500|75 427 85 462|130 427 100 462|845 520 820 530 740 705`,
  far: `323 90 185 132|365 103 333 132|430 103 465 132|474 90 600 130|474 78 640 95 770 132|474 76 800 100 945 132|474 75 700 80 1000 105 1070 120 1120 150|474 73 800 82 1100 105 1150 108 1170 130 1178 180 1165 210 1100 230 900 250 500 275 8 295|474 74 1000 95 1150 110 1230 130|474 74 1100 105 1320 118 1390 130`,
  sw: `344 30 344 345 380 370 560 400 782 430|363 30 400 150 480 300 560 390 782 430|487 30 487 540 520 570 620 608|567 30 550 80 545 200 545 350 600 390 782 430|610 30 635 80 643 170 643 345 680 375 782 415|592 147 585 250 600 370 650 410 782 430|460 5 572 108|628 0 600 108|661 30 670 130 700 230 765 308|691 30 691 150 720 200 760 225|807 5 807 108|871 30 830 105|803 147 795 223|792 262 792 308|830 5 870 60 881 120 881 395|921 30 921 340 908 395|1026 30 1026 360 1010 390 980 405|1076 30 1105 300 1107 450 1150 530 1230 590 1345 615|820 372 842 393|782 452 200 524|125 562 130 588|105 652 98 682|881 482 881 700 900 725 1100 750 1452 767|920 482 932 506|978 482 1050 540 1100 580 1200 600 1345 613|895 550 700 608|1015 567 1100 590 1345 614|695 612 850 592 1000 587 1150 560 1452 468|978 425 1100 400 1240 377 1400 310 1500 230 1568 120|978 430 1200 370 1290 320 1340 280 1360 200 1390 147|1195 30 1195 130 1215 200|1330 212 1450 200 1568 198|1505 25 1420 30 1350 80 1267 200|1258 30 1300 100 1380 160 1408 200 1410 240 1410 588|1310 30 1330 100 1380 170 1452 195|1325 0 1340 60 1380 108|1550 5 1450 60 1412 108|1555 5 1508 108|53 30 53 620 60 680`,
  s: `0 40 60 70 200 90 1043 118|0 76 1043 120|0 78 1515 10|115 0 120 50 150 80 250 90 1043 119|105 0 50 90 0 140|415 60 550 70 750 100 1043 119|570 0 580 50 620 80 800 105 1043 119|625 0 500 130 250 260 0 347|650 0 680 50 780 95 1043 117|685 0 730 60 820 95 1043 116|350 0 560 70 850 100 1043 114|1279 180 1279 405 1260 440 1000 472 600 490 30 500|1311 180 1311 655|1568 265 1290 460 1100 475 600 490 30 502|30 508 840 587|982 612 1242 673|0 649 600 672 1242 690|1568 265 1680 180`,
  whole: `506 124 640 119 836 117|421 138 760 122 836 118|421 139 600 143 625 150 631 165 631 212|421 140 650 148 800 190 832 196|506 141 700 142 817 144|506 173 700 175 740 190 817 250|817 165 700 155 421 140|459 188 700 190 832 196|459 234 600 236 705 237|506 247 705 240|817 219 780 208 459 188|401 300 500 290 604 273|401 302 520 300 604 291|401 306 500 310 604 297|842 710 960 695 988 685 994 660 994 570|842 711 940 710 1010 695 1019 670 1019 570`,
  page: `826 434 1000 435 1220 430 1364 426`,
};

/* Points of each critical-path edge; the arrow is at the last point */
const CRITICAL = {
  ne: `403 64 403 90|458 124 770 204|843 234 921 285`,
  page: `1332 189 1360 197 1380 206 1389 217 1389 380 1390 400 1393 412|1364 425 1320 428 1253 437 1233 443 1228 455 1223 500 1218 547 1195 590 1173 633 1147 640 1108 643|1079 642 1056 639 1040 632 1034 600 1032 528 1041 518 1055 514 1062 499 1057 486 940 472 895 469 887 460 882 446 872 441 846 441 836 436 820 431|207 806 138 800 80 791 65 779 65 373 72 352`,
  mid: `1198 272 1165 286 950 292 575 311 445 335|388 367 355 420 285 460|275 495 350 519 600 521 980 521 1035 530 1100 565 1210 579|1252 605 1259 645|1250 682 1210 730 1120 753`,
  w: `253 127 275 178`,
};

/* x, y, number of calls */
const COUNTS = {
  nw: "357 154 1 924 285 1 1133 372 1 1292 372 1 1292 460 1 1292 535 1 1468 534 1 203 609 1 445 609 1 553 609 1 1156 609 1 1330 609 2 1203 665 3 155 665 8 235 665 1 278 665 1 36 709 1 103 709 3 313 709 21 532 709 2 709 709 21 873 709 1",
  ne: "417 78 1 355 140 1 413 140 1 549 140 1 273 215 1 506 215 1 915 258 1 253 302 1 331 302 1 471 302 1 522 302 1 551 302 1 608 302 1 676 302 8 73 390 1 163 390 1 365 390 1 493 390 1 568 390 1 603 390 1 627 390 1 369 478 1 220 521 1 259 565 1 428 814 1 86 891 1 268 891 8 318 891 1 1179 608 1",
  n: "246 114 1 380 114 1 420 114 4 444 114 1 228 189 3 336 189 2 1040 40 1 77 245 8 110 245 2 58 288 7 326 288 5 640 288 1 865 366 1 1047 366 8 1098 366 1 1134 444 2 136 444 10 138 490 7 350 490 1 760 490 1 928 490 1 998 490 1 118 536 1 165 536 1 205 536 1 232 536 1 342 536 1 418 536 1 550 536 1 578 536 2 696 536 1 686 588 1 63 652 1 129 652 10 183 652 2 312 652 1 395 652 8 437 652 10 592 652 1 972 652 6",
  w: "422 216 1 662 216 1 808 295 3 480 386 1 1086 340 1 1282 386 1 1412 386 1 1485 386 1 870 438 4 1170 438 32 1368 438 8 616 502 14 665 502 5 782 502 4 808 502 6 911 502 1 948 502 1 1412 502 1 736 568 10 1003 568 8 1327 568 485 397 634 1 662 634 20 872 634 1 919 634 1 1100 634 2 1185 634 3 1215 634 1 1327 634 1 1478 634 3 414 678 1 711 678 29 1252 678 205 1333 678 4 536 709 9 688 709 34 847 709 10 885 709 8 1070 709 5 1358 709 9 636 754 133 512 799 1 540 799 1 208 799 2 823 799 8 875 799 8 1108 799 1 69 853 15",
  mid: "374 250 9 542 250 1 387 296 1 462 296 2 600 296 1 623 296 1 550 348 59 735 348 1 374 412 1 407 412 1 443 412 1 628 412 1 844 412 7 1332 412 1 660 478 1 833 478 1 1252 478 10 1407 478 1 278 544 3 597 544 1 707 544 1 754 544 10 791 544 10 1018 544 8 1097 544 1 1140 544 12 1181 544 108 1475 544 6 347 587 1 492 587 1 549 587 1 650 587 77 804 587 1 1360 587 12 816 619 3 848 619 1 924 619 1 948 619 1 1060 619 12 1120 619 204 1232 619 104 1411 619 8 912 665 3 415 709 6 446 709 1 502 709 397 640 709 13 971 709 2 1018 709 1 1042 709 5 1205 709 3 1236 709 3 350 844 10 407 844 10 1322 844 112",
  e: "400 70 1 568 70 1 637 70 1 775 24 2 855 24 1 980 24 1 1050 24 1 1057 116 2 1090 116 9 1032 168 1 327 168 1 747 298 1 26 298 1 94 364 8 139 364 10 263 364 1 362 364 8 694 364 10 313 408 10 445 408 8 526 408 10 629 408 253 757 408 8 905 408 213 1090 408 2 876 364 54 693 439 3 820 439 346 84 439 8 137 439 10 34 484 12 168 484 10 225 529 4 258 529 10 430 529 8 496 529 10 961 529 351 951 583 2 305 664 129 512 664 8 1175 664 5 398 777 1 562 777 5 659 777 35",
  far: "249 118 1 361 118 1 456 118 1 576 118 1 728 118 1 896 118 1 1082 118 1 1213 118 1 1348 118 1 1186 168 1",
  sw: "568 64 10 820 64 10 1500 64 10 1555 64 10 656 176 10 816 176 10 931 128 6 1408 177 1 1558 176 16 895 243 10 1518 243 7 604 296 20 805 296 10 1335 296 14 846 382 27 494 493 156 940 493 168 1092 535 172 833 576 1 1060 576 168 144 576 178 123 666 209 891 621 2",
  s: "586 8 2 743 8 6 847 57 20 359 219 8 1323 262 114 480 547 375 1138 643 363",
};

const numbers = (text) => text.trim().split(/\s+/).map(Number);

/* A smooth line through all of the points */
function spline(points) {
  const f = (n) => n.toFixed(1);
  let d = `M${points[0].map(f).join(" ")}`;
  points.slice(0, -1).forEach((p, i) => {
    const a = points[i - 1] || p;
    const q = points[i + 1];
    const b = points[i + 2] || q;
    const len = Math.hypot(q[0] - p[0], q[1] - p[1]);
    const t1 = Math.hypot(q[0] - a[0], q[1] - a[1]) || 1;
    const t2 = Math.hypot(b[0] - p[0], b[1] - p[1]) || 1;
    const k = len / 3;
    d += `C${f(p[0] + ((q[0] - a[0]) / t1) * k)} ${f(p[1] + ((q[1] - a[1]) / t1) * k)} ${f(q[0] - ((b[0] - p[0]) / t2) * k)} ${f(q[1] - ((b[1] - p[1]) / t2) * k)} ${f(q[0])} ${f(q[1])}`;
  });
  return d;
}

function paths(group) {
  return Object.entries(group).flatMap(([sheet, text]) =>
    text.split("|").map((one) => {
      const n = numbers(one);
      const points = [];
      for (let i = 0; i < n.length; i += 2) points.push(place(SHEETS[sheet], n[i], n[i + 1]));
      return spline(points);
    })
  );
}

const THIN = paths(CALLS);
const HEAVY = paths(CRITICAL);
const TAGS = Object.entries(COUNTS).flatMap(([sheet, text]) => {
  const n = numbers(text);
  const out = [];
  for (let i = 0; i < n.length; i += 3) {
    const [x, y] = place(SHEETS[sheet], n[i], n[i + 1]);
    out.push({ x: Math.round(x), y: Math.round(y) + 1, text: n[i + 2] === 1 ? "1 call" : `${n[i + 2]} calls` });
  }
  return out;
});
const BOXES = Object.entries(NODES).flatMap(([sheet, list]) =>
  list.map(([cx, cy, w, h, size, fill, name, inc, excl, calls]) => {
    const s = SHEETS[sheet];
    const [x, y] = place(s, cx - w / 2, cy - h / 2);
    return {
      x: Math.round(x), y: Math.round(y), w: Math.round(w / s[2]), h: Math.round(h / s[3]),
      size, fill, lines: [name, `Inc: ${inc}`, `Excl: ${excl}`, `${calls} total calls`],
    };
  })
);
/* Shares of time, written where edges meet a box */
const SHARES = BOXES.flatMap((b, i) => {
  const mid = b.x + Math.round(b.w / 2);
  const shift = (i % 3) * 3 - 3;
  if (b.fill === "r") {
    return [-12, -9, -6, 1, 5, 19].map((d) => [mid + d - 8, b.y + b.h + 2, "1.3%"])
      .concat([12, 17, 25, 27, 29, 34].map((d) => [b.x - 3, b.y + d, "8.1%"]))
      .concat([10, 16, 19, 22, 24, 28, 30, 40].map((d) => [b.x + b.w + 2, b.y + d, "14.9%"]));
  }
  return [
    [mid + shift, b.y - 1, "100.0%"],
    [mid - shift, b.y + b.h + 2, "60.5%"],
    ...(i % 2 ? [[mid + 6 - shift, b.y + b.h + 2, "4.1%"]] : []),
  ];
});

function CallGraph() {
  return (
    <Viewport>
      <Edges width="1920" height="944">
        <defs>
          <marker id="head" viewBox="0 0 8 8" refX="4" refY="4" markerWidth="7" markerHeight="7" markerUnits="userSpaceOnUse" orient="auto">
            <path d="M0 0L8 4L0 8z" />
          </marker>
        </defs>
        {THIN.map((d, i) => <Thin key={i} d={d} />)}
        <path d="M1124 1H1145L1163 7V13L1145 18H1124L1106 13V7Z" fill="#fff" stroke="#b4b4b4" />
        {["Total: 425.877 ms", "Xhprof Run (Namespace=xhprof)", "Excl: 0.372 ms (0.1%)", "1 total calls"].map((t, i) => (
          <Tag key={t} x="1134" y={6 + i * 3}>{t}</Tag>
        ))}
        {SHARES.map(([x, y, t], i) => <Tag key={i} $strong x={x} y={y}>{t}</Tag>)}
      </Edges>
      {BOXES.map((b, i) => (
        <Box key={i} $size={b.size} $fill={b.fill} style={{ left: b.x, top: b.y, width: b.w, height: b.h }}>
          {b.lines.map((line) => <span key={line}>{line}</span>)}
        </Box>
      ))}
      <Edges width="1920" height="944">
        {HEAVY.map((d, i) => <Thick key={i} d={d} markerEnd="url(#head)" />)}
        {TAGS.map((t, i) => <Tag key={i} $strong x={t.x} y={t.y}>{t.text}</Tag>)}
      </Edges>
    </Viewport>
  );
}

export default function App() {
  return (
    <Window>
      <Global />
      <Frame />
      <CallGraph />
    </Window>
  );
}
